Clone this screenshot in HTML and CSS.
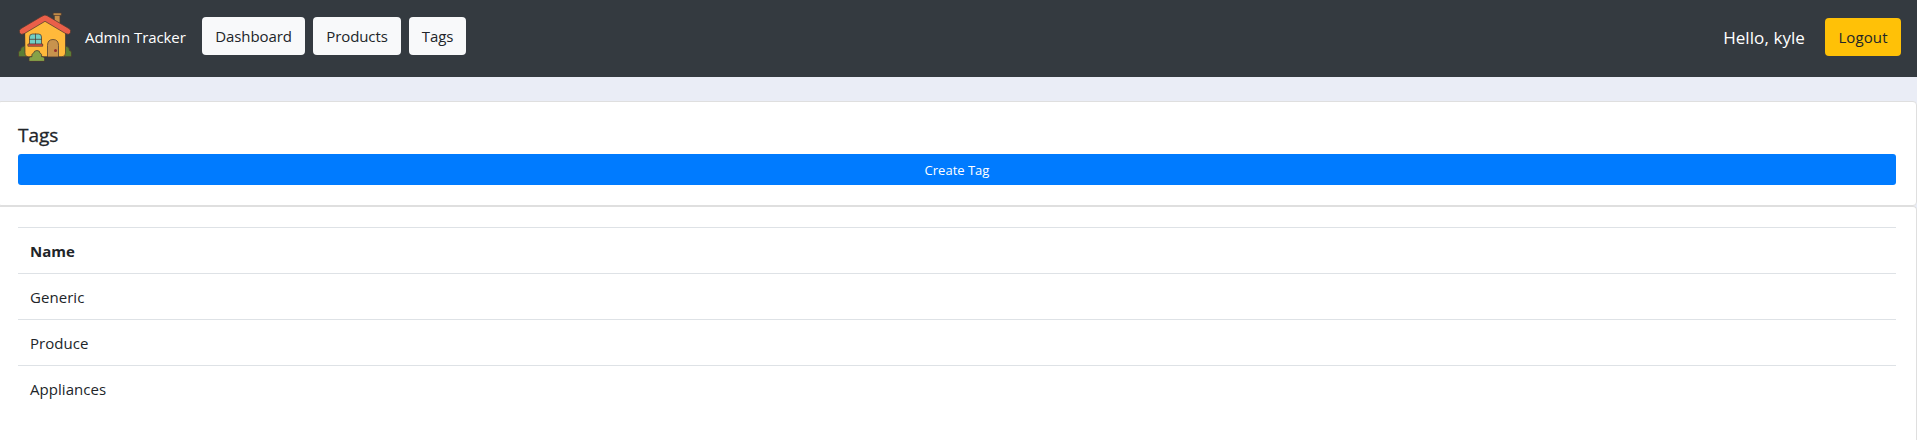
FILE: index.html
```html
<!DOCTYPE html>
<html lang="en">
<head>
<meta charset="utf-8">
<title>Admin Tracker</title>
<link rel="stylesheet" href="styles.css">
</head>
<body>
<nav class="navbar">
  <svg class="logo" viewBox="0 0 54 50" aria-hidden="true">
    <g stroke="#4b3a32" stroke-width=".75" stroke-linejoin="round" stroke-linecap="round">
      <path fill="#5b7e35" d="M.5 44.500v-4q0-2 2-2 0-4 3-4 1-2 3-1v11zM53.500 44.500v-4q0-2-2-2 0-4-3-4-1-2-3-1v11z"/>
      <path fill="#c98f49" d="M36.500 3h5.500V14l-5.500-4z"/>
      <path fill="#d59a4c" d="M35.300 1h8v2.300h-8z"/>
      <path fill="#ffb93b" d="M7 18 27 7.500 47.500 18v23q0 3.700-3.500 3.700H10.500q-3.500 0-3.500-3.700z"/>
      <path fill="#ea5f49" d="M25 3.600 2.600 16.800q-2 1.500-1 4t4.400 1L27 9.300l21 12.500q3.400 1.500 4.400-1t-1-4L29 3.600Q27 2.400 25 3.600z"/>
      <path fill="#c8934d" d="M29.500 44.700V33.500q0-6 5.500-6t5.500 6v11.200z"/>
      <path fill="#72cfc4" d="M11.500 32v-7q0-3 3-3h6q3 0 3 3v7z"/>
      <path fill="none" d="M17.500 22V32M11.500 27.300h12"/>
      <path fill="#e55343" d="M10.300 32h14.400v2.200H10.300z"/>
      <path fill="#86a248" d="M11 49v-2.800q1-2 3-1.500-1-3 1.500-3.500.5-2.700 3.500-2.700 3 0 3 2.700 2.500.5 1.500 3.500 2-.5 3 1.500V49z"/>
    </g>
    <circle cx="37.500" cy="38.500" r="1.500" fill="#972f2b"/>
  </svg>
  <span class="brand">Admin Tracker</span>
  <div class="links">
    <a class="btn btn-light dashboard">Dashboard</a>
    <a class="btn btn-light products">Products</a>
    <a class="btn btn-light tags">Tags</a>
  </div>
  <span class="greeting">Hello, kyle</span>
  <a class="btn btn-warning">Logout</a>
</nav>
<main class="content">
  <section class="card card-head">
    <h5 class="title">Tags</h5>
    <a class="create">Create Tag</a>
  </section>
  <section class="card card-list">
    <table class="table">
      <thead><tr><th>Name</th></tr></thead>
      <tbody>
        <tr><td>Generic</td></tr>
        <tr><td>Produce</td></tr>
        <tr><td>Appliances</td></tr>
      </tbody>
    </table>
  </section>
</main>
</body>
</html>
```
FILE: styles.css
```css
* { box-sizing: border-box; }
body {
  margin: 0;
  background: #eaedf6;
  color: #212529;
  font: 15px/24px "Open Sans", "Noto Sans", sans-serif;
}
.navbar {
  display: flex;
  align-items: flex-start;
  height: 77px;
  padding: 0 16px 0 18px;
  background: #343a40;
}
.logo { width: 54px; height: 50px; margin-top: 12px; }
.brand { width: 117px; margin: 25px 0 0 13px; color: #fff; white-space: nowrap; letter-spacing: -.08px; }
.links { display: flex; gap: 8px; margin-top: 17px; }
.btn {
  display: block;
  height: 38px;
  border-radius: 4px;
  line-height: 38px;
  text-align: center;
  white-space: nowrap;
}
.btn-light { background: #f8f9fa; letter-spacing: -.1px; }
.dashboard { width: 103px; }
.products { width: 88px; }
.tags { width: 57px; }
.greeting { margin: 26px 20px 0 auto; color: #fff; font-size: 17px; letter-spacing: .08px; }
.btn-warning { width: 76px; margin-top: 18px; background: #ffc107; letter-spacing: .1px; }
.content { margin: 24px 0 0 -3px; }
.card {
  padding: 20px;
  background: #fff;
  border: 1px solid #dfdfdf;
  border-radius: 4px;
}
.card-head { height: 105px; }
.title {
  height: 24px;
  margin: 0 0 8px;
  font-size: 19px;
  line-height: 26px;
  font-weight: 500;
  -webkit-text-stroke: .3px #212529;
}
.create {
  display: block;
  height: 31px;
  border-radius: 3px;
  background: #007bff;
  color: #fff;
  font-size: 13px;
  line-height: 32px;
  text-align: center;
}
.card-list {
  height: 234px;
  border-bottom: 0;
  border-bottom-left-radius: 0;
  border-bottom-right-radius: 0;
}
.table { width: 100%; border-collapse: collapse; }
.table th, .table td {
  height: 46px;
  padding: 0 12px;
  border-top: 1px solid #dee2e6;
  text-align: left;
}
.table th { font-weight: 700; }
.table td { letter-spacing: .05px; }
```
